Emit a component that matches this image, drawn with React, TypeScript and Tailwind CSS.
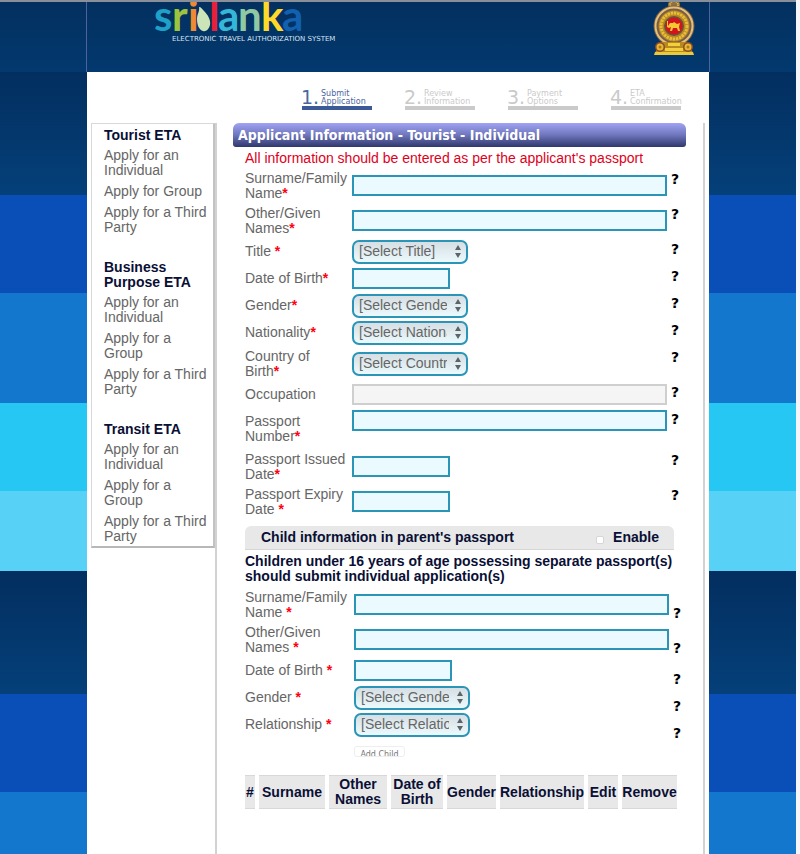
import React from "react";

type Field = {
  id: string;
  label: string[];
  kind: "text" | "date" | "select" | "disabled";
  option?: string;
  size?: "short" | "normal" | "tall";
  spaced?: boolean;
};

const steps = [
  { n: "1.", lines: ["Submit", "Application"], active: true },
  { n: "2.", lines: ["Review", "Information"], active: false },
  { n: "3.", lines: ["Payment", "Options"], active: false },
  { n: "4.", lines: ["ETA", "Confirmation"], active: false },
];

const menu = [
  { title: "Tourist ETA", items: ["Apply for an Individual", "Apply for Group", "Apply for a Third Party"] },
  { title: "Business Purpose ETA", items: ["Apply for an Individual", "Apply for a Group", "Apply for a Third Party"] },
  { title: "Transit ETA", items: ["Apply for an Individual", "Apply for a Group", "Apply for a Third Party"] },
];

const applicantFields: Field[] = [
  { id: "surname", label: ["Surname/Family", "Name"], kind: "text", size: "normal" },
  { id: "given", label: ["Other/Given", "Names"], kind: "text", size: "normal" },
  { id: "title", label: ["Title"], kind: "select", option: "[Select Title]", size: "short", spaced: true },
  { id: "dob", label: ["Date of Birth"], kind: "date", size: "short" },
  { id: "gender", label: ["Gender"], kind: "select", option: "[Select Gender]", size: "short" },
  { id: "nationality", label: ["Nationality"], kind: "select", option: "[Select Nationality]", size: "short" },
  { id: "country", label: ["Country of", "Birth"], kind: "select", option: "[Select Country]", size: "normal" },
  { id: "occupation", label: ["Occupation"], kind: "disabled", size: "short" },
  { id: "passport", label: ["Passport", "Number"], kind: "text", size: "tall" },
  { id: "issued", label: ["Passport Issued", "Date"], kind: "date", size: "normal" },
  { id: "expiry", label: ["Passport Expiry", "Date"], kind: "date", size: "normal", spaced: true },
];

const childFields: Field[] = [
  { id: "child-surname", label: ["Surname/Family", "Name"], kind: "text", size: "normal", spaced: true },
  { id: "child-given", label: ["Other/Given", "Names"], kind: "text", size: "normal", spaced: true },
  { id: "child-dob", label: ["Date of Birth"], kind: "date", size: "short", spaced: true },
  { id: "child-gender", label: ["Gender"], kind: "select", option: "[Select Gender]", size: "short", spaced: true },
  { id: "child-relationship", label: ["Relationship"], kind: "select", option: "[Select Relationship]", size: "short", spaced: true },
];

const rowHeight = { short: "h-[27px]", normal: "h-[35px]", tall: "h-[41px]" };

function Control({ field }: { field: Field }) {
  if (field.kind === "select") {
    return (
      <div className="relative w-[116px]">
        <select
          id={field.id}
          className="block h-6 w-full appearance-none rounded-[7px] border-2 border-[#2b95b8] bg-linear-to-b from-[#d6dfe3] to-[#ecfafd] pr-[19px] pb-[2px] pl-[5px] text-[14px] leading-[18px] text-[#666]"
        >
          <option>{field.option}</option>
        </select>
        <svg className="pointer-events-none absolute top-[5px] right-[7px]" width="6" height="13" viewBox="0 0 6 13" fill="#5c6468">
          <path d="M3 0 6 5H0zM3 13 0 8h6z" />
        </svg>
      </div>
    );
  }
  if (field.kind === "disabled") {
    return <input id={field.id} type="text" disabled className="block h-[21px] w-full border-2 border-[#cfcfcf] bg-[#f5f5f5] px-1" />;
  }
  const width = field.kind === "date" ? "w-[98px]" : "w-full";
  return <input id={field.id} type="text" className={`block h-[21px] border-2 border-[#2b95b8] bg-[#ebfaff] px-1 ${width}`} />;
}

function FieldRow({ field, child = false }: { field: Field; child?: boolean }) {
  const last = field.label.length - 1;
  return (
    <div className={`flex ${rowHeight[field.size ?? "normal"]}`}>
      <label htmlFor={field.id} className={`flex shrink-0 items-center leading-[15px] ${child ? "w-[109px]" : "w-[107px]"}`}>
        <span>
          {field.label.map((line, i) => (
            <span key={line} className="block whitespace-nowrap">
              {line}
              {i === last && field.kind !== "disabled" && (
                <span className="font-bold text-[#ff0010]">{field.spaced ? " *" : "*"}</span>
              )}
            </span>
          ))}
        </span>
      </label>
      <div className={`flex min-w-0 flex-1 ${field.size === "tall" ? "items-start pt-[2px]" : "items-center"}`}>
        <Control field={field} />
      </div>
      <span
        className={`ml-1 w-2 shrink-0 font-['DejaVu_Sans',sans-serif] text-[14px] leading-[15px] font-bold text-black ${
          child ? "self-center pt-[17px]" : "pt-1"
        }`}
      >
        ?
      </span>
    </div>
  );
}

function Logo() {
  const letters = [
    { c: "s", x: 154, fill: "#1ea0c8" },
    { c: "r", x: 172, fill: "#9cc43c" },
    { c: "i", x: 188, fill: "#ee8a32" },
    { c: "l", x: 209, fill: "#e8203a" },
    { c: "a", x: 218, fill: "#35b8d8" },
    { c: "n", x: 238, fill: "#90c8a4" },
    { c: "k", x: 261, fill: "#ffd92a" },
    { c: "a", x: 282, fill: "#1260b0" },
  ];
  return (
    <svg width="200" height="32" viewBox="150 2 200 32" className="block" fontFamily="Lato, sans-serif" fontSize="42" fontWeight="700">
      {letters.map((l) => (
        <text key={l.x} x={l.x} y="31" fill={l.fill}>
          {l.c}
        </text>
      ))}
      <path d="M199 7c2 0 3 2 5 4 4 4 7 9 6 14-1 4-4 7-7 6-4-1-6-6-6-12 0-5 3-8 2-12z" fill="#cbe4b8" />
    </svg>
  );
}

function Emblem() {
  return (
    <svg width="44" height="54" viewBox="0 2 44 54" className="block">
      <circle cx="22" cy="5" r="6" fill="#94713a" />
      <circle cx="22" cy="5" r="4" fill="none" stroke="#e6c85c" strokeWidth="1.5" strokeDasharray="1.5 1" />
      <circle cx="22" cy="26" r="20.5" fill="#7a5a4c" />
      <circle cx="22" cy="26" r="18.5" fill="none" stroke="#e2c374" strokeWidth="2" />
      <circle cx="22" cy="26" r="15.5" fill="#b98a1f" />
      <circle cx="22" cy="26" r="13" fill="none" stroke="#e6be3c" strokeWidth="3" strokeDasharray="2.4 .8" />
      <circle cx="22" cy="26" r="10" fill="#6d513e" />
      <circle cx="22" cy="26" r="8.5" fill="#d3141c" />
      <path d="M15 21h1v5l2-3h3l1-1 3 2 3-1-1 4 1 4h-2l-1-3h-4l-1 3h-2l1-4-2 1-2-1z" fill="#f3c92f" />
      <path d="M8 42h28l5 11H3z" fill="#b88a1d" />
      <path d="M16 43h12v3H16zM13 48h18v3H13z" fill="#f1cf3f" />
      <circle cx="8" cy="47" r="5" fill="#8b4a2c" />
      <circle cx="8" cy="47" r="3.5" fill="#e8b82f" />
      <circle cx="8" cy="47" r="1.5" fill="#a87a20" />
      <circle cx="36" cy="47" r="5" fill="#8b4a2c" />
      <circle cx="36" cy="47" r="3.5" fill="#e8b82f" />
      <circle cx="36" cy="47" r="1.5" fill="#a87a20" />
      <path d="M3 52h38l1 3H2z" fill="#ecc936" />
    </svg>
  );
}

function Steps() {
  return (
    <ol className="ml-auto flex w-[380px] justify-between">
      {steps.map((s) => (
        <li key={s.n} className={`w-[71px] ${s.active ? "text-[#4a66a0]" : "text-[#cacaca]"}`}>
          <div className="flex h-[17px] items-end whitespace-nowrap">
            <span className="w-5 shrink-0 font-['DejaVu_Sans',sans-serif] text-[19px] leading-[17px]">{s.n}</span>
            <span className="font-['DejaVu_Sans',sans-serif] text-[8px] leading-[8px]">
              {s.lines[0]}
              <br />
              {s.lines[1]}
            </span>
          </div>
          <div className={`ml-px h-1 ${s.active ? "bg-[#3d5a98]" : "bg-[#cacaca]"}`} />
        </li>
      ))}
    </ol>
  );
}

function Sidebar() {
  return (
    <nav className="w-[124px] shrink-0 self-start border-t border-r-2 border-b-2 border-l border-[#d8d8d8] border-r-[#c2c2c2] border-b-[#b8b8b8] pt-1 pb-[2px] pl-3 leading-[15px]">
      <div className="flex flex-col gap-[25px]">
        {menu.map((group) => (
          <section key={group.title}>
            <h2 className="mb-[5px] font-bold text-[#0a0f35]">{group.title}</h2>
            <ul className="flex flex-col gap-[6px]">
              {group.items.map((item) => (
                <li key={item}>
                  <a href="#" className="block">{item}</a>
                </li>
              ))}
            </ul>
          </section>
        ))}
      </div>
    </nav>
  );
}

function ChildTable() {
  const columns = [
    { name: "#", width: "w-[10px]" },
    { name: "Surname", width: "w-[66px]" },
    { name: "Other Names", width: "w-[58px]" },
    { name: "Date of Birth", width: "w-[52px]" },
    { name: "Gender", width: "w-[49px]" },
    { name: "Relationship", width: "w-[84px]" },
    { name: "Edit", width: "w-[30px]" },
    { name: "Remove", width: "w-[55px]" },
  ];
  return (
    <table className="-ml-1 w-[440px] table-fixed border-separate border-spacing-x-1 border-spacing-y-0 leading-[15px] text-[#0a0f35]">
      <thead>
        <tr>
          {columns.map((c) => (
            <th key={c.name} className={`h-[34px] border-y border-[#d8d8d8] bg-[#e8e8e8] p-0 text-center font-bold ${c.width}`}>
              {c.name}
            </th>
          ))}
        </tr>
      </thead>
    </table>
  );
}

export default function App() {
  return (
    <div className="flex min-h-screen flex-col border-r-4 border-[#f4f6fa] font-['Liberation_Sans',Arial,sans-serif] text-[14px] text-[#666]">
      <header className="h-[72px] border-t-2 border-[#8a9099] bg-linear-to-b from-[#03305f] to-[#03396f]">
        <div className="mx-auto flex h-full w-full max-w-[624px] items-start justify-between border-x border-[#4d62a0] pr-[13px] pl-[63px]">
          <div>
            <Logo />
            <p className="ml-[22px] font-['DejaVu_Sans',sans-serif] text-[7px] leading-[10px] whitespace-nowrap text-[#d5e3f0]">
              ELECTRONIC TRAVEL AUTHORIZATION SYSTEM
            </p>
          </div>
          <Emblem />
        </div>
      </header>

      <div className="flex flex-1 bg-[linear-gradient(180deg,#032e60_0,#043a70_80px,#05407a_123px,#0a4eb8_123px,#0a4eb8_221px,#1377ce_221px,#1377ce_331px,#26c7f2_331px,#26c7f2_419px,#58d1f7_419px,#58d1f7_499px)] bg-[length:100%_499px]">
        <div className="mx-auto flex w-full max-w-[622px] flex-col bg-white">
          <div className="flex h-[51px] items-start pt-[17px] pr-7">
            <Steps />
          </div>

          <div className="flex flex-1 pr-1 pl-1">
            <Sidebar />
            <main className="min-w-0 flex-1 border-r-2 border-l-2 border-[#d2d2d2] pr-[17px] pl-4">
              <h1 className="h-6 rounded-t-[6px] rounded-b-[3px] bg-linear-to-b from-[#a0a4f4] via-[#7076bc] to-[#30386e] pl-[5px] font-['DejaVu_Sans_Condensed','DejaVu_Sans',sans-serif] text-[14px] leading-6 font-bold text-white">
                Applicant Information - Tourist - Individual
              </h1>

              <form className="pr-[7px] pl-3">
                <p className="h-[21px] pt-[3px] leading-[17px] text-[#e0001b]">
                  All information should be entered as per the applicant's passport
                </p>

                {applicantFields.map((f) => (
                  <FieldRow key={f.id} field={f} />
                ))}

                <div className="mt-[7px] mr-[5px] flex h-6 items-center rounded-t-[6px] border-b border-[#d6d6d6] bg-[#e8e8e8] pr-[15px] pl-4 font-bold text-[#0a0f35]">
                  <h2>Child information in parent's passport</h2>
                  <input
                    id="enable-child"
                    type="checkbox"
                    className="mt-1 mr-[9px] ml-auto size-2 appearance-none rounded-[2px] border border-[#d6d6d6] bg-white"
                  />
                  <label htmlFor="enable-child">Enable</label>
                </div>

                <p className="py-1 leading-[15px] font-bold text-[#0a0f35]">
                  Children under 16 years of age possessing separate passport(s) should submit individual application(s)
                </p>

                <div className="-mt-px -mr-[2px]">
                  {childFields.map((f) => (
                    <FieldRow key={f.id} field={f} child />
                  ))}
                </div>

                <div className="mt-2 mb-[18px] pl-[109px]">
                  <button
                    type="button"
                    className="block h-[11px] w-[51px] overflow-hidden rounded-[3px] border border-[#eeeeee] bg-white pt-[3px] font-['DejaVu_Sans',sans-serif] text-[8px] leading-[9px] text-[#777]"
                  >
                    Add Child
                  </button>
                </div>

                <ChildTable />
              </form>
            </main>
          </div>
        </div>
      </div>
    </div>
  );
}
